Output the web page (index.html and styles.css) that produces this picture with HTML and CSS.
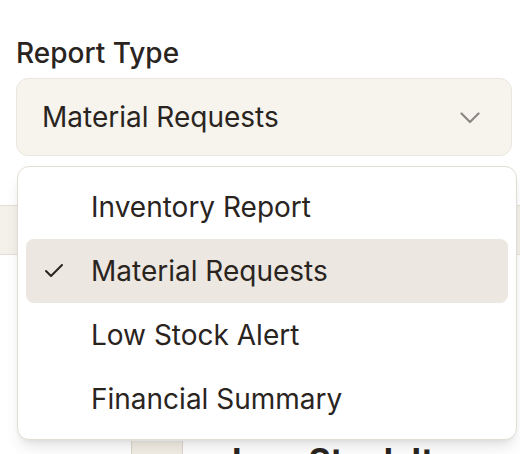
FILE: index.html
```html
<!DOCTYPE html>
<html lang="en">
<head>
<meta charset="utf-8">
<title>Report Type</title>
<link rel="stylesheet" href="styles.css">
</head>
<body>
<div class="page">
  <div class="form">
    <label class="label" for="report-type">Report Type</label>
    <button class="select" id="report-type" type="button">
      <span class="select-value">Material Requests</span>
      <svg class="chevron" width="20" height="12" viewBox="0 0 20 12" aria-hidden="true"><path d="M1.5 1.5 10 10 18.5 1.5" fill="none" stroke="currentColor" stroke-width="2.2" stroke-linecap="round" stroke-linejoin="round"/></svg>
    </button>
  </div>

  <div class="table">
    <div class="table-head"></div>
    <div class="table-body"></div>
  </div>

  <div class="section">
    <div class="thumb"></div>
    <h2 class="section-title">Low Stock Items</h2>
  </div>

  <ul class="menu" role="listbox">
    <li class="option"><span class="check"></span><span>Inventory Report</span></li>
    <li class="option selected"><span class="check"><svg width="24" height="24" viewBox="0 0 24 24" aria-hidden="true"><path d="M20 6 9 17l-5-5" fill="none" stroke="currentColor" stroke-width="2" stroke-linecap="round" stroke-linejoin="round"/></svg></span><span>Material Requests</span></li>
    <li class="option"><span class="check"></span><span>Low Stock Alert</span></li>
    <li class="option"><span class="check"></span><span>Financial Summary</span></li>
  </ul>
</div>
</body>
</html>
```

FILE: styles.css
```css
* { box-sizing: border-box; }

html, body {
  margin: 0;
  padding: 0;
  background: #ffffff;
  overflow: hidden;
}

body {
  font-family: Inter, "Noto Sans", "Liberation Sans", sans-serif;
  color: #2a241f;
}

.page {
  position: relative;
  width: 520px;
  height: 454px;
  overflow: hidden;
}

.form {
  padding: 36px 8px 0 16px;
  display: flex;
  flex-direction: column;
  gap: 8px;
}

.label {
  font-size: 28px;
  line-height: 34px;
  font-weight: 500;
  color: #2a241f;
}

.select {
  height: 78px;
  width: 496px;
  display: flex;
  align-items: center;
  justify-content: space-between;
  padding: 0 31px 0 25px;
  background: #f7f4ee;
  border: 1px solid #ebe7df;
  border-radius: 12px;
  font: inherit;
  font-size: 28px;
  color: #2a241f;
  text-align: left;
}

.chevron {
  color: #8c8781;
  margin-top: 2px;
}

.table {
  margin-top: 49px;
}

.table-head {
  height: 50px;
  background: #f4f1eb;
  border-top: 1px solid #e4dfd6;
  border-bottom: 1px solid #e4dfd6;
}

.table-body {
  height: 186px;
}

.section {
  display: flex;
  align-items: flex-start;
  padding-left: 131px;
  gap: 49px;
}

.thumb {
  width: 52px;
  height: 40px;
  background: #f2eee6;
  border-left: 1px solid #ddd7cd;
  border-right: 1px solid #ddd7cd;
}

.section-title {
  margin: 0;
  font-size: 34px;
  line-height: 40px;
  font-weight: 700;
  color: #2a241f;
  white-space: nowrap;
  padding-top: 0;
}

.menu {
  position: absolute;
  top: 166px;
  left: 17px;
  width: 500px;
  margin: 0;
  padding: 8px;
  list-style: none;
  background: #ffffff;
  border: 1px solid #e2ddd4;
  border-radius: 12px;
  box-shadow: 0 10px 15px -3px rgba(0, 0, 0, 0.1), 0 4px 6px -4px rgba(0, 0, 0, 0.1);
}

.option {
  height: 64px;
  display: flex;
  align-items: center;
  gap: 25px;
  padding-left: 16px;
  border-radius: 8px;
  font-size: 28px;
  color: #2a241f;
}

.option.selected {
  background: #ece7e0;
}

.check {
  width: 24px;
  height: 24px;
  flex: none;
  color: #2a241f;
}

.check svg {
  display: block;
}
```
